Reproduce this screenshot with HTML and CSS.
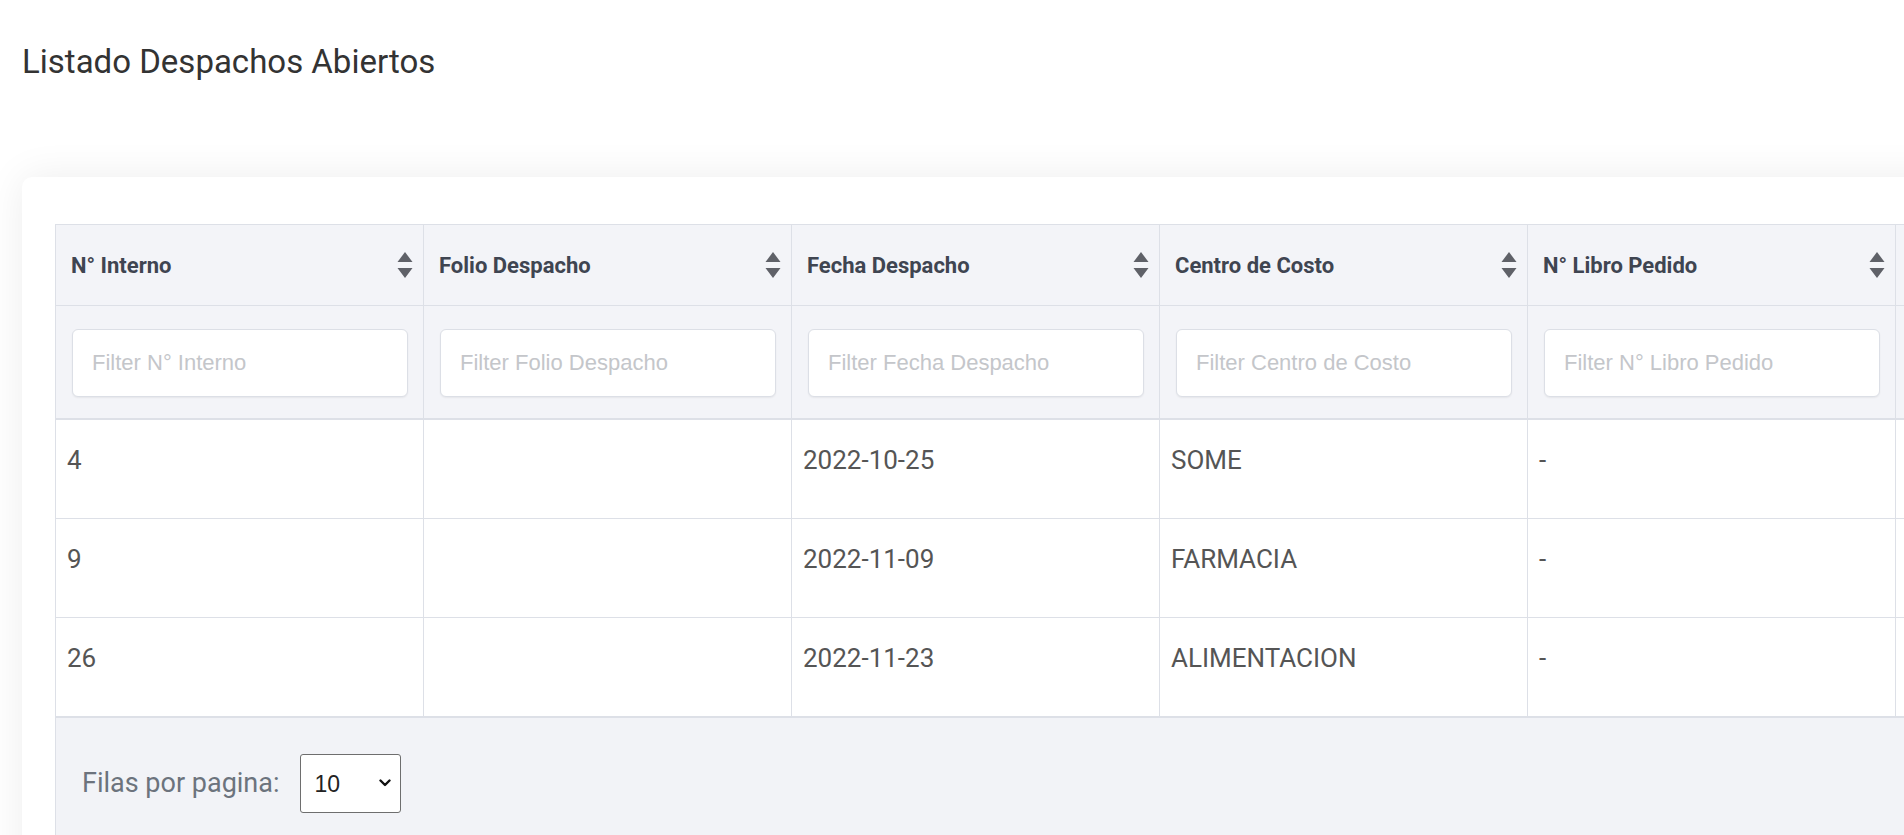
FILE: index.html
```html
<!DOCTYPE html>
<html lang="es">
<head>
<meta charset="utf-8">
<title>Listado Despachos Abiertos</title>
<link rel="stylesheet" href="styles.css">
</head>
<body>
<main class="page">
  <h1 class="title">Listado Despachos Abiertos</h1>
  <section class="card">
    <div class="grid">
      <div class="row head">
        <div class="th"><span>N° Interno</span><svg class="sort" viewBox="0 0 16 26"><path d="M8 0 L15.5 10 L0.5 10 Z M0.5 16 L15.5 16 L8 26 Z"/></svg></div>
        <div class="th"><span>Folio Despacho</span><svg class="sort" viewBox="0 0 16 26"><path d="M8 0 L15.5 10 L0.5 10 Z M0.5 16 L15.5 16 L8 26 Z"/></svg></div>
        <div class="th"><span>Fecha Despacho</span><svg class="sort" viewBox="0 0 16 26"><path d="M8 0 L15.5 10 L0.5 10 Z M0.5 16 L15.5 16 L8 26 Z"/></svg></div>
        <div class="th"><span>Centro de Costo</span><svg class="sort" viewBox="0 0 16 26"><path d="M8 0 L15.5 10 L0.5 10 Z M0.5 16 L15.5 16 L8 26 Z"/></svg></div>
        <div class="th"><span>N° Libro Pedido</span><svg class="sort" viewBox="0 0 16 26"><path d="M8 0 L15.5 10 L0.5 10 Z M0.5 16 L15.5 16 L8 26 Z"/></svg></div>
        <div class="th"></div>
      </div>
      <div class="row filters">
        <div class="fc"><input class="filter" type="text" placeholder="Filter N° Interno"></div>
        <div class="fc"><input class="filter" type="text" placeholder="Filter Folio Despacho"></div>
        <div class="fc"><input class="filter" type="text" placeholder="Filter Fecha Despacho"></div>
        <div class="fc"><input class="filter" type="text" placeholder="Filter Centro de Costo"></div>
        <div class="fc"><input class="filter" type="text" placeholder="Filter N° Libro Pedido"></div>
        <div class="fc"></div>
      </div>
      <div class="row data">
        <div class="td">4</div><div class="td"></div><div class="td">2022-10-25</div><div class="td">SOME</div><div class="td">-</div><div class="td"></div>
      </div>
      <div class="row data">
        <div class="td">9</div><div class="td"></div><div class="td">2022-11-09</div><div class="td">FARMACIA</div><div class="td">-</div><div class="td"></div>
      </div>
      <div class="row data">
        <div class="td">26</div><div class="td"></div><div class="td">2022-11-23</div><div class="td">ALIMENTACION</div><div class="td">-</div><div class="td"></div>
      </div>
      <div class="footer">
        <label class="per-page" for="rows">Filas por pagina:</label>
        <span class="select-wrap">
          <select id="rows" class="select">
            <option>10</option>
            <option>25</option>
            <option>50</option>
          </select>
          <svg class="chev" viewBox="0 0 12 8"><path d="M1.5 1.5 L6 6 L10.5 1.5" fill="none" stroke="#111" stroke-width="2.4" stroke-linecap="round" stroke-linejoin="round"/></svg>
        </span>
      </div>
    </div>
  </section>
</main>
</body>
</html>
```

FILE: styles.css
```css
html, body {
  margin: 0;
  background: #ffffff;
  overflow: hidden;
}

body {
  font-family: Roboto, "Liberation Sans", sans-serif;
  color: #555;
}

.page {
  padding: 42px 0 0 22px;
}

.title {
  margin: 0;
  font-size: 33px;
  line-height: 40px;
  font-weight: 400;
  color: #333;
}

.card {
  margin-top: 95px;
  width: 2400px;
  height: 720px;
  background: #fff;
  border-radius: 10px;
  box-shadow: 0 0 40px rgba(0, 0, 0, 0.075);
  padding: 47px 0 0 33px;
  box-sizing: border-box;
}

.grid {
  width: 2209px;
  border-top: 1px solid #dde0e7;
  border-left: 1px solid #dde0e7;
}

.row {
  display: grid;
  grid-template-columns: repeat(6, 368px);
}

.th,
.fc,
.td {
  box-sizing: border-box;
  border-right: 1px solid #dde0e7;
  border-bottom: 1px solid #dde0e7;
}

.th {
  height: 81px;
  background: #f3f4f8;
  display: flex;
  align-items: center;
  justify-content: space-between;
  padding: 0 10px 0 15px;
  font-size: 22px;
  font-weight: 700;
  color: #3f4551;
}

.sort {
  width: 16px;
  height: 26px;
  fill: #5f6168;
  flex: none;
}

.fc {
  height: 114px;
  background: #f3f4f8;
  border-bottom-width: 2px;
  padding: 23px 15px 0 16px;
}

.filter {
  display: block;
  box-sizing: border-box;
  width: 100%;
  height: 68px;
  margin: 0;
  padding: 0 19px;
  border: 1px solid #dcdfe6;
  border-radius: 6px;
  background: #fff;
  box-shadow: 0 1px 2px rgba(0, 0, 0, 0.06);
  font-family: "Liberation Sans", Arial, sans-serif;
  font-size: 22px;
  color: #444;
  outline: none;
}

.filter::placeholder {
  color: #c4c6ca;
}

.td {
  height: 99px;
  background: #fff;
  padding: 25px 11px 0 11px;
  font-size: 26px;
  line-height: 30px;
  color: #555;
}

.footer {
  height: 160px;
  box-sizing: border-box;
  background: #f2f3f7;
  border-top: 1px solid #dde0e7;
  padding: 36px 0 0 26px;
  display: flex;
  align-items: flex-start;
  gap: 20px;
}

.per-page {
  font-size: 27px;
  line-height: 59px;
  color: #6c737d;
}

.select-wrap {
  position: relative;
  display: inline-block;
}

.select {
  appearance: none;
  -webkit-appearance: none;
  width: 101px;
  height: 59px;
  box-sizing: border-box;
  border: 1px solid #6e6e6e;
  border-radius: 3px;
  background: #fff;
  padding: 0 0 0 14px;
  font-family: "Liberation Sans", Arial, sans-serif;
  font-size: 23px;
  color: #222;
}

.chev {
  position: absolute;
  right: 10px;
  top: 25px;
  width: 12px;
  height: 8px;
  pointer-events: none;
}
```
